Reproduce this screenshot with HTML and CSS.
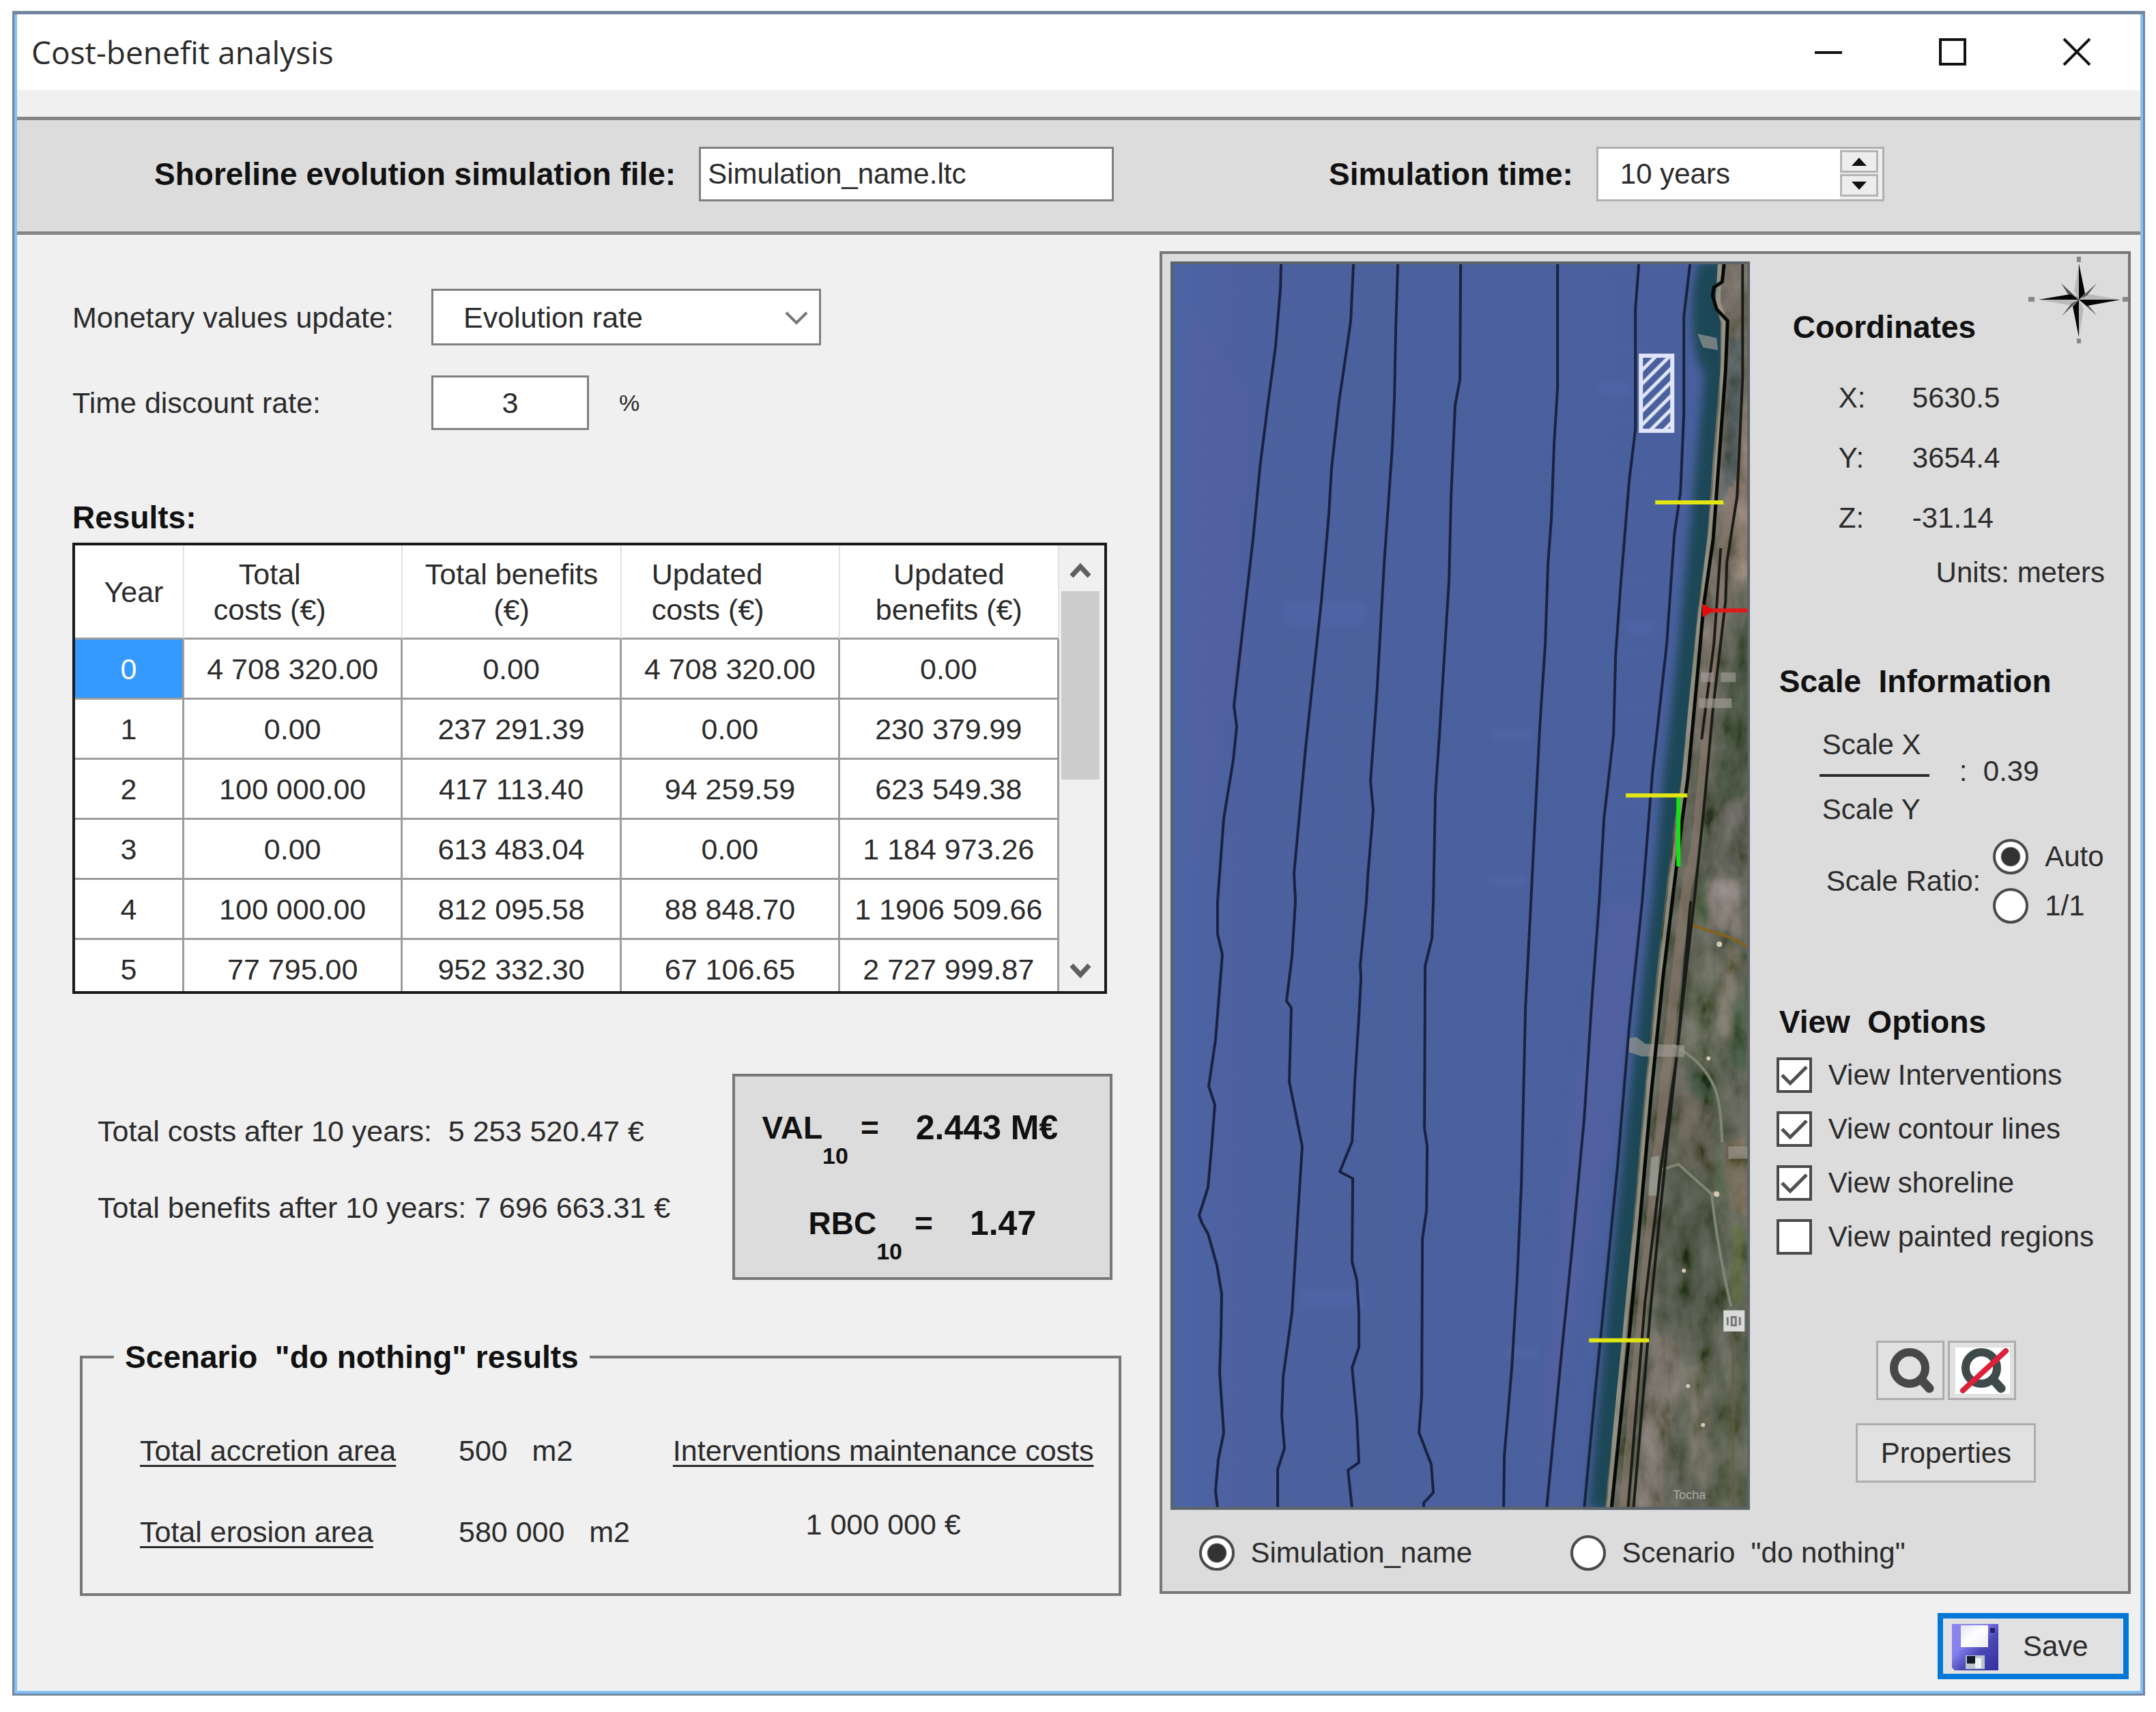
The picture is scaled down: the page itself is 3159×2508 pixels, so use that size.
FILE: index.html
```html
<!DOCTYPE html>
<html lang="en">
<head>
<meta charset="utf-8">
<title>Cost-benefit analysis</title>
<link rel="stylesheet" href="styles.css">
</head>
<body>
<div class="window">
  <header class="titlebar">
    <h1 class="titlebar-text">Cost-benefit analysis</h1>
    <div class="caption-buttons">
      <button class="caption-button" type="button" aria-label="Minimize"><svg viewBox="0 0 44 44"><path d="M2 23H42" /></svg></button>
      <button class="caption-button" type="button" aria-label="Maximize"><svg viewBox="0 0 44 44"><path d="M4 4H40V40H4Z" /></svg></button>
      <button class="caption-button" type="button" aria-label="Close"><svg viewBox="0 0 44 44"><path d="M3 3L41 41M41 3L3 41" /></svg></button>
    </div>
  </header>

  <div class="file-band">
    <div class="band-field">
      <label class="strong" for="sim-file">Shoreline evolution simulation file:</label>
      <input class="box file-input" id="sim-file" type="text" value="Simulation_name.ltc">
    </div>
    <div class="band-field">
      <label class="strong" for="sim-time">Simulation time:</label>
      <div class="spinner">
        <input class="spinner-input" id="sim-time" type="text" value="10 years">
        <div class="spinner-buttons">
          <button type="button" aria-label="Increase"><svg viewBox="0 0 24 14"><path d="M12 1L23 13H1Z" /></svg></button>
          <button type="button" aria-label="Decrease"><svg viewBox="0 0 24 14"><path d="M12 13L1 1H23Z" /></svg></button>
        </div>
      </div>
    </div>
  </div>

  <main class="content">
    <section class="analysis">
      <div class="form-grid">
        <label for="update">Monetary values update:</label>
        <div class="select-wrap">
          <select class="box" id="update"><option>Evolution rate</option></select>
          <svg class="select-arrow" viewBox="0 0 36 22"><path d="M3 3L18 18L33 3" /></svg>
        </div>
        <label for="rate">Time discount rate:</label>
        <div class="rate">
          <input class="box rate-input" id="rate" type="text" value="3">
          <span class="percent">%</span>
        </div>
      </div>

      <h2 class="results-title">Results:</h2>
      <div class="results">
        <table class="results-table">
          <colgroup><col class="col-year"><col><col><col><col></colgroup>
          <thead>
            <tr>
              <th class="head-year">Year</th>
              <th class="head-total">Total<br>costs (€)</th>
              <th>Total benefits<br>(€)</th>
              <th class="head-updated">Updated<br>costs (€)</th>
              <th>Updated<br>benefits (€)</th>
            </tr>
          </thead>
          <tbody>
            <tr><td class="selected">0</td><td>4 708 320.00</td><td>0.00</td><td>4 708 320.00</td><td>0.00</td></tr>
            <tr><td>1</td><td>0.00</td><td>237 291.39</td><td>0.00</td><td>230 379.99</td></tr>
            <tr><td>2</td><td>100 000.00</td><td>417 113.40</td><td>94 259.59</td><td>623 549.38</td></tr>
            <tr><td>3</td><td>0.00</td><td>613 483.04</td><td>0.00</td><td>1 184 973.26</td></tr>
            <tr><td>4</td><td>100 000.00</td><td>812 095.58</td><td>88 848.70</td><td>1 1906 509.66</td></tr>
            <tr><td>5</td><td>77 795.00</td><td>952 332.30</td><td>67 106.65</td><td>2 727 999.87</td></tr>
          </tbody>
        </table>
        <div class="scrollbar">
          <button type="button" aria-label="Scroll up"><svg viewBox="0 0 32 24"><path d="M3 20L16 6L29 20" /></svg></button>
          <div class="scroll-track"><div class="scroll-thumb"></div></div>
          <button type="button" aria-label="Scroll down"><svg viewBox="0 0 32 24"><path d="M3 4L16 18L29 4" /></svg></button>
        </div>
      </div>

      <div class="summary">
        <div class="totals">
          <p>Total costs after 10 years:&nbsp; 5 253 520.47 €</p>
          <p>Total benefits after 10 years: 7 696 663.31 €</p>
        </div>
        <div class="indicators">
          <p><span>VAL</span><sub>10</sub><span class="equals">=</span><span class="figure">2.443 M€</span></p>
          <p><span>RBC</span><sub>10</sub><span class="equals">=</span><span class="figure">1.47</span></p>
        </div>
      </div>

      <fieldset class="scenario">
        <legend>Scenario &nbsp;"do nothing" results</legend>
        <dl class="areas">
          <dt>Total accretion area</dt><dd>500 &nbsp; m2</dd>
          <dt>Total erosion area</dt><dd>580 000 &nbsp; m2</dd>
        </dl>
        <dl class="maintenance">
          <dt>Interventions maintenance costs</dt><dd>1 000 000 €</dd>
        </dl>
      </fieldset>
    </section>

    <section class="map-panel">
      <svg class="compass" viewBox="0 0 150 130">
        <g fill="#555"><path d="M75 65L49 41L66 68ZM75 65L101 41L80 68ZM75 65L50 89L72 60ZM75 65L101 88L78 60Z" /></g>
        <path d="M75 65L68 53L75 12L83 53ZM75 65L68 78L75 120L82 78ZM75 65L60 57L16 65L60 73ZM75 65L90 57L136 65L90 73Z" fill="#b9b9b9" />
        <path d="M75 65V12L84 56ZM75 65V120L66 75ZM75 65H16L63 57ZM75 65H136L87 74Z" fill="#050505" />
        <g fill="#888"><rect x="72" y="2" width="6" height="8" /><rect x="72" y="122" width="6" height="7" /><rect x="1" y="61" width="9" height="7" /><rect x="139" y="61" width="8" height="7" /></g>
      </svg>

      <div class="map-area">
        <svg class="map" viewBox="0 0 849 1828" role="img" aria-label="Shoreline map">
          <defs>
            <filter id="ground" x="0" y="0" width="100%" height="100%">
              <feTurbulence type="fractalNoise" baseFrequency="0.035 0.018" numOctaves="4" seed="8" />
              <feColorMatrix values="0.9 0 0 0 -0.17  0.8 0 0 0 -0.12  0.85 0 0 0 -0.19  0 0 0 0 1" />
            </filter>
            <filter id="soft" x="-20%" y="-5%" width="140%" height="110%"><feGaussianBlur stdDeviation="7" /></filter>
            <filter id="patch" x="-30%" y="-30%" width="160%" height="160%"><feGaussianBlur stdDeviation="4" /></filter>
            <clipPath id="land"><path d="M802 0L798 60L806 90L805 161L795 283L786 406L773 504L761 626L749 755L738 822L724 937L711 1052L694 1221L676 1424L662 1573L636 1828H849V0Z" /></clipPath>
            <pattern id="hatch" width="20" height="20" patternUnits="userSpaceOnUse"><path d="M-5 15L15 -5M5 25L25 5" stroke="#dfe4f6" stroke-width="5" /></pattern>
            <linearGradient id="sea"><stop offset="0" stop-color="#4b66a6" /><stop offset=".1" stop-color="#4e609f" /><stop offset=".3" stop-color="#4b619e" /><stop offset="1" stop-color="#4a609e" /></linearGradient>
          </defs>
          <rect width="849" height="1828" fill="url(#sea)" />
          <g fill="#5661a2" opacity=".6" filter="url(#soft)">
            <path d="M30 60L110 200L90 600L40 900L20 500Z" />
            <path d="M640 940L690 940L640 1300L560 1700L530 1828L580 1300Z" />
          </g>
          <g fill="#546bb0" opacity=".4" filter="url(#patch)"><rect x="165" y="500" width="120" height="32" /><rect x="470" y="685" width="60" height="16" /><rect x="465" y="900" width="55" height="14" /><rect x="625" y="180" width="50" height="14" /><rect x="665" y="528" width="45" height="14" /><rect x="190" y="1505" width="95" height="26" /><rect x="490" y="1590" width="50" height="16" /></g>
          <path d="M775 0C760 40 758 130 782 165L774 250L760 400L745 550L722 755L705 937L668 1255L640 1526L612 1828H660L690 1526L722 1255L742 937L765 755L790 550L820 180L820 0Z" fill="#1d4656" filter="url(#soft)" />
          <g clip-path="url(#land)">
            <rect x="600" width="249" height="1828" fill="#454b3d" />
            <g filter="url(#patch)">
              <path d="M800 0H849V460L820 520L770 720L750 760L790 420Z" fill="#675f55" />
              <path d="M816 110L838 110L836 300L812 350L800 380L814 250Z" fill="#2f4145" />
              <path d="M846 180L849 460L826 470L830 340Z" fill="#8a7260" />
              <path d="M849 500L820 600L800 760L790 900H849Z" fill="#2c3b26" />
              <path d="M849 780L800 800L786 900H849Z" fill="#4b4c42" />
              <path d="M783 905L834 905L836 990L792 975Z" fill="#7a6f6c" />
              <path d="M772 905H786L790 970L765 960Z" fill="#26401f" />
              <path d="M765 1000L812 1020L815 1140L797 1200L750 1145Z" fill="#4f5443" />
              <path d="M815 1000L836 1010L818 1140L800 1120Z" fill="#726b5c" />
              <path d="M820 1083L846 1075V1185L822 1180Z" fill="#213f20" />
              <path d="M745 1170L790 1190L802 1340L738 1320Z" fill="#4e4a3e" />
              <path d="M752 1172L790 1195L800 1240L760 1215Z" fill="#26412c" />
              <path d="M730 1329L745 1322L793 1360L815 1556L710 1550Z" fill="#303b29" />
              <path d="M796 1240L812 1360L806 1400L798 1340Z" fill="#25431f" />
              <path d="M812 1290L849 1280V1400L822 1390Z" fill="#6b5b44" />
              <path d="M825 1410L840 1410L838 1530L822 1520Z" fill="#47581f" />
              <path d="M709 1565L742 1578L752 1640L735 1700L720 1828H675Z" fill="#6e655d" />
              <path d="M756 1620L785 1610L790 1800L765 1780Z" fill="#625e50" />
              <path d="M800 1620L849 1600V1828H800Z" fill="#414a33" />
            </g>
            <rect x="600" width="249" height="1828" filter="url(#ground)" opacity=".35" />
            <path d="M824 330L813 420L798 560L785 700L770 850L753 937L736 1086L715 1296L692 1525L664 1828" fill="none" stroke="#8b786b" stroke-width="14" opacity=".6" />
            <path d="M804 0L802 60L812 90L808 200L798 330L786 440L775 530L762 650L750 780L735 900L721 1020L702 1200L685 1390L665 1560L642 1828" fill="none" stroke="#a8a69a" stroke-width="7" opacity=".65" />
            <path d="M735 1147Q780 1170 797 1210Q806 1230 808 1290M720 1330L744 1322L793 1366Q800 1440 821 1530M793 1366L801 1362" fill="none" stroke="#7f8573" stroke-width="4" />
            <path d="M758 970L820 990L849 1005" fill="none" stroke="#85611c" stroke-width="4" />
            <path d="M824 1570V1828" fill="none" stroke="#6b5b3a" stroke-width="4" opacity=".6" />
            <path d="M838 0V170L830 344L815 440L813 498L795 651L781 804L767 937L750 1086L727 1296L704 1525L678 1828M806 420L796 560L778 700M762 937L742 1160L718 1330L695 1525L670 1828" fill="none" stroke="#1b1c17" stroke-width="4" />
            <g fill="#d5c9b4"><circle cx="804" cy="1000" r="4" /><circle cx="788" cy="1167" r="3" /><circle cx="800" cy="1366" r="4" /><circle cx="752" cy="1478" r="3" /><circle cx="758" cy="1647" r="3" /><circle cx="780" cy="1704" r="3" /></g>
          </g>
          <g fill="#a19c95" opacity=".65"><path d="M772 106L800 112L802 130L780 126Z" /><path d="M669 1138L682 1136L696 1146L753 1148V1165L690 1164L672 1158Z" /><rect x="777" y="602" width="18" height="14" /><rect x="806" y="602" width="22" height="14" /><rect x="774" y="640" width="48" height="14" /><rect x="817" y="1296" width="30" height="18" /></g>
          <path d="M704 1312L716 1310L712 1368H700Z" fill="#9da39a" opacity=".7" />
          <g fill="none" stroke="#19233f" stroke-width="4" stroke-linejoin="round">
            <path d="M162 4L161 40L154 124L141 222L131 302L121 406L109 510L93 651L97 681L92 730L78 816L69 937V985L76 1015L66 1140L56 1208L65 1235L60 1300L55 1356L42 1397L46 1408L55 1424L68 1470L75 1512L74 1570L72 1627L78 1715L70 1755L66 1800L69 1826" />
            <path d="M268 4L264 87L255 150L247 204L236 302L232 370L221 498L210 600L198 712L181 896L183 937L178 1018L170 1083L177 1093L174 1201L193 1296L187 1390L178 1539L165 1634L163 1690L167 1738L157 1769V1826" />
            <path d="M333 4L330 99L328 200L325 271L313 442L302 638L293 761L297 804L289 900L287 937L278 1030L279 1050L276 1106L270 1201L266 1289L248 1333L267 1343L266 1465L273 1492L276 1540V1590L266 1620L273 1695L276 1759L260 1770L266 1826" />
            <path d="M425 4L424 173L417 210L411 344L408 467L394 693L388 780L385 937L383 991L373 1032L372 1269L376 1296L375 1390L369 1431L368 1661L364 1715L382 1762L385 1803L371 1818V1826" />
            <path d="M567 4V185L562 265L558 375L553 442L549 559L541 681L534 816L528 937L520 1093L514 1350L508 1485L500 1620L489 1749L488 1826" />
            <path d="M686 4L681 69V246L672 320L659 479L652 577L649 693L635 816L628 937L617 1086L606 1255L589 1438L572 1607L551 1826" />
            <path d="M761 4L752 81V222L747 338L738 400L727 559L706 749L691 937L672 1120L655 1323L635 1526L623 1647L606 1826" />
          </g>
          <path d="M811 4L808 30L796 38L794 50L800 70L816 87L813 161L804 283L795 406L781 504L770 626L758 755L749 822L735 937L721 1052L704 1221L686 1424L672 1573L646 1826" fill="none" stroke="#070907" stroke-width="5" />
          <rect x="689" y="138" width="46" height="110" fill="url(#hatch)" stroke="#dfe5fb" stroke-width="6" />
          <path d="M710 353H810M667 782H757M613 1580H701" stroke="#e2e612" stroke-width="6" />
          <path d="M744 785V886" stroke="#12e312" stroke-width="6" />
          <path d="M784 511H849" stroke="#e0191b" stroke-width="6" /><path d="M779 501L796 511L779 521Z" fill="#e9090c" />
          <rect x="810" y="1536" width="31" height="31" fill="#d9dbd8" /><path d="M816 1546V1558M822 1558V1546H828V1558ZM834 1546V1558" stroke="#777" stroke-width="3" fill="none" />
          <text class="map-label" x="736" y="1812">Tocha</text>
          <rect x="2" y="2" width="845" height="1824" fill="none" stroke="#5d6468" stroke-width="4" />
        </svg>
        <div class="scenario-choice">
          <label class="option"><input type="radio" name="layer" checked>Simulation_name</label>
          <label class="option"><input type="radio" name="layer">Scenario &nbsp;"do nothing"</label>
        </div>
      </div>

      <aside class="side">
        <h2 class="coordinates-title">Coordinates</h2>
        <dl class="coordinates">
          <dt>X:</dt><dd>5630.5</dd>
          <dt>Y:</dt><dd>3654.4</dd>
          <dt>Z:</dt><dd>-31.14</dd>
        </dl>
        <p class="units">Units: meters</p>

        <h2 class="side-title">Scale &nbsp;Information</h2>
        <div class="scale">
          <div class="fraction"><span>Scale X</span><span>Scale Y</span></div>
          <p class="scale-value">: &nbsp;0.39</p>
        </div>
        <div class="ratio">
          <span>Scale Ratio:</span>
          <div class="ratio-options">
            <label class="option"><input type="radio" name="ratio" checked>Auto</label>
            <label class="option"><input type="radio" name="ratio">1/1</label>
          </div>
        </div>

        <h2 class="side-title">View &nbsp;Options</h2>
        <div class="view-options">
          <label class="option"><input type="checkbox" checked>View Interventions</label>
          <label class="option"><input type="checkbox" checked>View contour lines</label>
          <label class="option"><input type="checkbox" checked>View shoreline</label>
          <label class="option"><input type="checkbox">View painted regions</label>
        </div>

        <div class="tools">
          <div class="zoom-buttons">
            <button class="button" type="button" aria-label="Zoom"><svg viewBox="0 0 94 81"><circle cx="46" cy="37" r="23" fill="none" stroke="#484848" stroke-width="12" /><path d="M64 55L75 67" stroke="#484848" stroke-width="13" stroke-linecap="round" /></svg></button>
            <button class="button" type="button" aria-label="Reset zoom"><svg viewBox="0 0 94 81"><rect x="8" y="7" width="80" height="68" fill="#fff" /><circle cx="46" cy="37" r="23" fill="none" stroke="#3f4a4a" stroke-width="12" /><path d="M64 55L75 67" stroke="#3f4a4a" stroke-width="13" stroke-linecap="round" /><path d="M19 70L82 12" stroke="#de2138" stroke-width="8" stroke-linecap="round" /></svg></button>
          </div>
          <button class="button properties" type="button">Properties</button>
        </div>
      </aside>
    </section>
  </main>

  <footer class="actions">
    <button class="save" type="button">
      <svg viewBox="0 0 68 70">
        <defs><linearGradient id="disk" x2="1" y2="1"><stop offset="0" stop-color="#8d86ee" /><stop offset=".35" stop-color="#867ff0" /><stop offset=".6" stop-color="#4a48b4" /><stop offset="1" stop-color="#3230a0" /></linearGradient>
        <linearGradient id="paper" x2="1" y2="1"><stop offset="0" stop-color="#e4e4f4" /><stop offset=".5" stop-color="#fff" /><stop offset="1" stop-color="#e8e8f6" /></linearGradient></defs>
        <path d="M0 2H68V70H4L0 66Z" fill="url(#disk)" />
        <rect x="13" y="4" width="40" height="32" fill="url(#paper)" />
        <rect x="56" y="8" width="7" height="7" fill="#24206e" />
        <rect x="20" y="48" width="28" height="20" fill="#b9c4d0" /><rect x="22" y="49" width="12" height="11" fill="#151a28" /><rect x="34" y="52" width="9" height="15" fill="#eef4f2" />
      </svg>
      <span>Save</span>
    </button>
  </footer>
</div>
</body>
</html>
```
FILE: styles.css
```css
:root {
  --face: #f0f0f0;
  --panel: #dcdcdc;
  --line: #777;
  --text: #2b2b2b;
  --ui: "Liberation Sans", Arial, sans-serif;
}

* { box-sizing: border-box; }

body {
  margin: 0;
  padding: 16px 16px 24px 18px;
  background: #fff;
  color: var(--text);
  font: 42px/50px var(--ui);
}

h1, h2, p, dl, dd { margin: 0; }

button, input, select { font: inherit; color: inherit; }

button { padding: 0; border: 0; background: none; }

h2, .strong, legend {
  font: bold 46px/50px var(--ui);
  color: #111;
}

.window {
  border: 3px solid #71879f;
  border-top-width: 5px;
  padding: 0 4px 4px;
  background: #84c0f4;
}

/* Title bar */
.titlebar {
  display: flex;
  align-items: center;
  justify-content: space-between;
  height: 111px;
  padding: 0 71px 2px 21px;
  background: #fff;
}

.titlebar-text {
  font: 46px/56px "Open Sans", "Noto Sans", sans-serif;
}

.caption-buttons { display: flex; gap: 138px; }

.caption-button { width: 44px; height: 44px; }

.caption-button svg {
  display: block;
  width: 44px;
  fill: none;
  stroke: #111;
  stroke-width: 4;
}

/* Simulation band */
.file-band {
  display: grid;
  grid-template-columns: 1721fr 1189fr;
  align-items: center;
  height: 212px;
  padding-left: 201px;
  border-top: 39px solid var(--face);
  border-bottom: 5px solid #858585;
  background: linear-gradient(#858585 5px, var(--panel) 5px);
}

.band-field { display: flex; align-items: center; gap: 34px; }

.box {
  border: 3px solid #7f7f7f;
  border-radius: 0;
  background: #fff;
  outline: 0;
}

.file-input { width: 608px; height: 80px; padding: 0 10px; }

.spinner {
  display: flex;
  width: 422px;
  height: 80px;
  border: 3px solid #b0b0b0;
  background: #fff;
}

.spinner-input {
  flex: 1;
  min-width: 0;
  padding: 0 32px;
  border: 0;
  background: none;
}

.spinner-buttons {
  display: grid;
  width: 62px;
  padding: 2px 6px 4px 0;
  gap: 2px;
  background: #eee;
}

.spinner-buttons button {
  border: 3px solid #b4b4b4;
  background: #ededed;
  line-height: 0;
}

.spinner-buttons svg { width: 24px; fill: #111; }

/* Two-column content */
.content {
  display: grid;
  grid-template-columns: minmax(0, 1536fr) minmax(0, 1423fr);
  align-items: start;
  gap: 56px;
  padding: 24px 14px 0 81px;
  background: var(--face);
}

.analysis { font-size: 43px; }

.form-grid {
  display: grid;
  grid-template-columns: 526px 1fr;
  align-items: center;
  gap: 44px 0;
  padding-top: 55px;
}

.select-wrap { position: relative; width: 571px; }

.select-wrap select {
  display: block;
  width: 100%;
  height: 83px;
  padding: 0 44px;
  appearance: none;
}

.select-arrow {
  position: absolute;
  right: 18px;
  top: 32px;
  width: 36px;
  fill: none;
  stroke: #777;
  stroke-width: 4;
  pointer-events: none;
}

.rate { display: flex; align-items: center; gap: 44px; }

.rate-input { width: 231px; height: 80px; text-align: center; }

.percent { font-size: 34px; }

/* Results grid */
.results-title { margin: 103px 0 12px; }

.results {
  display: flex;
  height: 661px;
  margin-right: 21px;
  overflow: hidden;
  border: 4px solid #1a1a1a;
  background: #fff;
}

.results-table {
  flex: 1;
  width: 100%;
  table-layout: fixed;
  border-spacing: 0;
  text-align: center;
}

.col-year { width: 160px; }

.results-table th {
  height: 138px;
  padding: 0;
  border-right: 2px solid #e2e2e2;
  border-bottom: 3px solid #9c9c9c;
  font-weight: normal;
  line-height: 52px;
}

.results-table .head-year { padding-left: 14px; }

.results-table .head-total { padding-right: 68px; }

.results-table .head-updated { padding-left: 44px; text-align: left; }

.results-table td {
  height: 88px;
  padding: 0;
  border-right: 3px solid #9c9c9c;
  border-bottom: 3px solid #9c9c9c;
}

.results-table .selected { background: #3399ff; color: #fff; }

.scrollbar {
  display: flex;
  flex: none;
  flex-direction: column;
  width: 66px;
  padding-right: 4px;
  background: var(--face);
}

.scrollbar button { height: 67px; }

.scrollbar svg {
  width: 32px;
  fill: none;
  stroke: #606060;
  stroke-width: 7;
}

.scroll-track { flex: 1; padding: 0 3px; }

.scroll-thumb { height: 276px; background: #cdcdcd; }

/* Totals and indicators */
.summary {
  display: flex;
  justify-content: space-between;
  margin: 117px 13px 88px 37px;
}

.totals {
  display: grid;
  align-content: start;
  gap: 62px;
  padding-top: 59px;
}

.indicators {
  width: 557px;
  height: 302px;
  padding: 50px 0 0 40px;
  border: 4px solid var(--line);
  background: var(--panel);
  color: #111;
  font: bold 46px/50px var(--ui);
}

.indicators p { display: flex; }

.indicators p + p { padding: 54px 0 0 68px; }

.indicators sub { padding-top: 46px; font-size: 34px; line-height: 40px; }

.equals { margin: 0 54px 0 18px; }

.figure { font-size: 50px; }

/* Scenario box */
.scenario {
  display: flex;
  justify-content: space-between;
  min-width: 0;
  height: 375px;
  margin: 0 0 0 11px;
  padding: 87px 36px 0 84px;
  border: 4px solid var(--line);
}

.scenario legend { margin-left: -38px; padding: 0 16px; }

.scenario dt { text-decoration: underline; text-decoration-thickness: 3px; text-underline-offset: 6px; }

.areas {
  display: grid;
  grid-template-columns: 467px auto;
  align-content: start;
  gap: 69px 0;
}

.maintenance {
  display: grid;
  align-content: start;
  gap: 58px;
  text-align: center;
}

/* Map panel */
.map-panel {
  position: relative;
  display: grid;
  grid-template-columns: minmax(0, 849fr) minmax(0, 554fr);
  padding: 11px 0 30px 12px;
  border: 4px solid var(--line);
  background: var(--panel);
}

.compass {
  position: absolute;
  top: 2px;
  right: -3px;
  width: 150px;
}

.map { display: block; width: 100%; }

.map-label { font: 18px var(--ui); fill: #a9aaa4; }

.option { display: flex; align-items: center; white-space: nowrap; gap: 24px; }

.option input {
  flex: none;
  width: 52px;
  height: 52px;
  margin: 0;
  appearance: none;
  border: 4px solid #4a4a4a;
  background: #fff;
}

.option input[type="radio"] { border-radius: 50%; }

.option input[type="radio"]:checked {
  background: radial-gradient(circle, #333 13px, #fff 15px);
}

.option input[type="checkbox"]:checked {
  background: #fff url("data:image/svg+xml,%3Csvg xmlns='http://www.w3.org/2000/svg' viewBox='0 0 44 44'%3E%3Cpath d='M4 22L16 34L40 10' fill='none' stroke='%23505050' stroke-width='5'/%3E%3C/svg%3E");
}

.scenario-choice {
  display: grid;
  grid-template-columns: 544px auto;
  padding: 37px 0 0 42px;
}

/* Side column */
.side { padding: 71px 34px 0 39px; }

.coordinates-title { padding-left: 24px; }

.coordinates {
  display: grid;
  grid-template-columns: 108px auto;
  gap: 38px 0;
  margin: 54px 0 30px;
  padding-left: 91px;
}

.units { text-align: right; }

.side-title { margin-top: 109px; padding-left: 4px; }

.scale {
  display: flex;
  align-items: center;
  gap: 44px;
  margin: 43px 0 18px;
  padding-left: 63px;
}

.fraction { display: grid; width: 161px; }

.fraction span { padding: 0 0 18px 4px; }

.fraction span + span { padding: 23px 0 0 4px; border-top: 4px solid #2b2b2b; }

.scale-value { padding-bottom: 18px; }

.ratio {
  display: flex;
  align-items: center;
  gap: 18px;
  margin-bottom: 119px;
  padding-left: 73px;
  white-space: nowrap;
}

.ratio-options { display: grid; gap: 20px; }

.view-options { display: grid; gap: 27px; margin-top: 27px; }

.tools {
  display: grid;
  justify-items: center;
  gap: 34px;
  margin-top: 126px;
  padding-left: 16px;
}

.zoom-buttons { display: flex; gap: 5px; }

.button {
  width: 100px;
  height: 87px;
  border: 3px solid #adadad;
  background: #e1e1e1;
}

.button svg { display: block; width: 100%; }

.properties { width: 264px; }

/* Footer */
.actions {
  display: flex;
  justify-content: flex-end;
  padding: 25px 17px 17px;
  background: var(--face);
}

.save {
  display: flex;
  align-items: center;
  width: 280px;
  height: 97px;
  gap: 36px;
  padding: 0 13px;
  border: 8px solid #0078d7;
  background: #e1e1e1;
}

.save svg { width: 68px; }
```
